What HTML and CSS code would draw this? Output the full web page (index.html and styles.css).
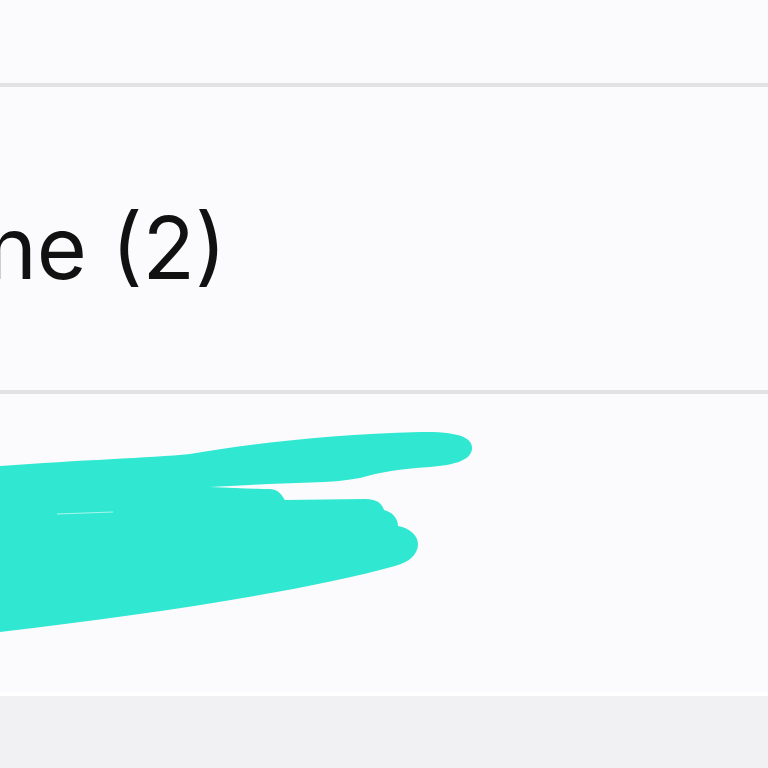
FILE: index.html
```html
<!DOCTYPE html>
<html lang="en">
<head>
    <meta charset="UTF-8">
    <meta name="viewport" content="width=device-width, initial-scale=1.0">
    <title>List</title>
    <link rel="stylesheet" href="styles.css">
</head>
<body>

    <div class="list">
        <div class="row row-top"></div>
        <div class="row row-label">
            <span class="label">ne (2)</span>
        </div>
        <div class="row row-scribble">
            <!-- redacted with a marker -->
            <svg class="scribble" width="768" height="298" viewBox="0 0 768 298">
                <path fill="#30e8d1" d="M0,72 C80,66 150,64 190,60 C250,50 330,40 420,38 C462,37 473,45 472,55 C471,66 455,71 430,73 C400,75 380,78 360,84 C330,90 290,88 250,91 L210,93 C235,94 255,95 270,95 C280,96 282,102 285,106 L365,105 C378,105 382,110 384,116 C392,118 398,124 398,132 C410,134 418,142 418,150 C418,160 410,168 395,172 C300,198 150,220 0,238 Z"/>
                <path stroke="#a8f5ea" stroke-width="1.2" fill="none" d="M57,120 L113,118"/>
            </svg>
        </div>
    </div>
    <div class="footer"></div>

</body>
</html>
```

FILE: styles.css
```css
:root {
    --row-bg: #fbfbfd;
    --divider: #e2e2e5;
    --page-bg: #f1f1f3;
    --text-color: #111111;
}

body {
    margin: 0;
    padding: 0;
    font-family: Inter, 'Liberation Sans', sans-serif;
    background-color: var(--page-bg);
    overflow: hidden;
}

.list {
    display: flex;
    flex-direction: column;
    background-color: var(--row-bg);
}

.row {
    background-color: var(--row-bg);
}

.row-top {
    height: 83px;
    border-bottom: 4px solid var(--divider);
}

.row-label {
    height: 303px;
    display: flex;
    align-items: center;
    border-bottom: 4px solid var(--divider);
    overflow: hidden;
}

.label {
    margin-left: -14px;
    padding-top: 18px;
    font-size: 86px;
    font-weight: 400;
    color: var(--text-color);
    white-space: nowrap;
}

.row-scribble {
    height: 298px;
    border-bottom: 4px solid #ffffff;
}

.scribble {
    display: block;
}

.footer {
    height: 70px;
    background-color: var(--page-bg);
}
```
